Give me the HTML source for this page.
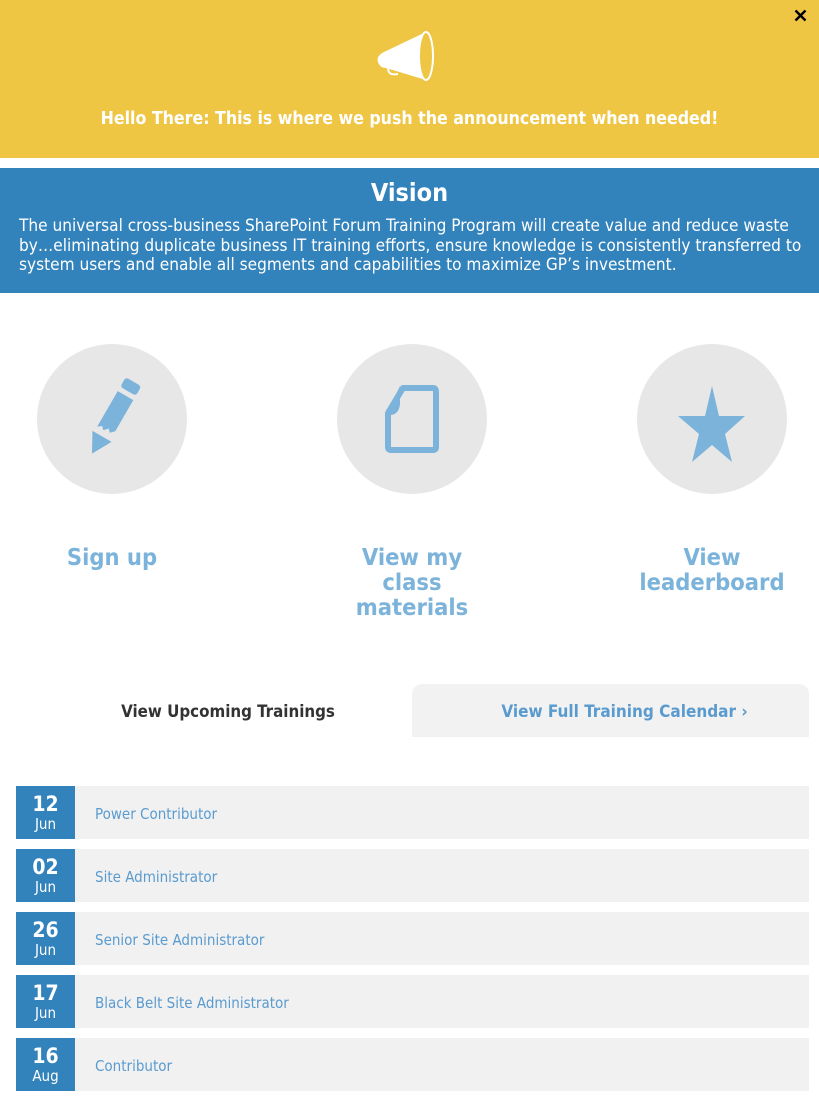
<!DOCTYPE html>
<html><head><meta charset="utf-8"><style>
*{margin:0;padding:0;box-sizing:border-box}
body{width:819px;height:1102px;background:#fff;font-family:"DejaVu Sans Condensed","DejaVu Sans","Liberation Sans",sans-serif;position:relative;overflow:hidden}
.ann{position:absolute;left:0;top:0;width:819px;height:158px;background:#EEC644}
.ann p{position:absolute;top:109px;width:100%;text-align:center;color:#fff;font-weight:bold;font-size:17.6px;white-space:nowrap}
.vis{position:absolute;left:0;top:168px;width:819px;height:125px;background:#3282BC;color:#fff}
.vis h2{text-align:center;font-size:25px;margin-top:10px;line-height:30px}
.vis p{margin:9px 0 0 19px;font-size:17.1px;line-height:19.5px;white-space:nowrap}
.c{position:absolute;top:344px;width:150px;height:150px;border-radius:50%;background:#E7E7E7}
.lbl{position:absolute;top:545px;width:200px;text-align:center;color:#7BB3DA;font-weight:bold;font-size:23.5px;line-height:25px}
.t1{position:absolute;left:30px;top:701px;width:396px;text-align:center;font-weight:bold;font-size:16.8px;color:#333;white-space:nowrap}
.t2{position:absolute;left:412px;top:684px;width:397px;height:53px;background:#F2F2F2;border-radius:10px 10px 0 0;text-align:center;font-weight:bold;font-size:17px;color:#5A9BCF;padding:18px 0 0 28px;white-space:nowrap}
.row{position:absolute;left:16px;width:793px;height:53px;background:#F1F1F1}
.d{position:absolute;left:0;top:0;width:59px;height:53px;background:#3282BC;color:#fff;text-align:center}
.d b{display:block;font-size:21px;line-height:22px;margin-top:7px}
.d span{display:block;font-size:15px;line-height:19px}
.row i{position:absolute;left:79px;top:19px;font-style:normal;font-size:15px;color:#5A9BCF}
</style></head><body>
<div class="ann">
<svg style="position:absolute;left:794px;top:9px" width="13" height="13" viewBox="0 0 13 13"><path d="M1.5 1.5 L11.5 11.5 M11.5 1.5 L1.5 11.5" stroke="#000" stroke-width="2.4"/></svg>
<svg style="position:absolute;left:374px;top:30px" width="64" height="52" viewBox="0 0 64 52">
<path d="M52 2 L10 22 Q2 26 4 32 Q6 38 12 38 L52 50 Z" fill="#fff"/>
<path d="M14 38 Q14 46 24 44" fill="none" stroke="#fff" stroke-width="2"/>
<ellipse cx="52" cy="26" rx="7" ry="24" fill="#EEC644" stroke="#fff" stroke-width="2"/>
</svg>
<p>Hello There: This is where we push the announcement when needed!</p>
</div>
<div class="vis"><h2>Vision</h2>
<p>The universal cross-business SharePoint Forum Training Program will create value and reduce waste<br>by…eliminating duplicate business IT training efforts, ensure knowledge is consistently transferred to<br>system users and enable all segments and capabilities to maximize GP’s investment.</p></div>
<div class="c" style="left:37px"><svg width="150" height="150" viewBox="0 0 150 150">
<g fill="#7BB3DA" transform="rotate(30 75 75)">
<rect x="66" y="32" width="18" height="11" rx="3"/>
<path d="M66 48 L84 48 L84 84 L80 88 L77 85 L73 89 L70 86 L66 89 Z"/>
<path d="M64 95 L86 95 L75 115 Z"/></g></svg></div>
<div class="c" style="left:337px"><svg width="150" height="150" viewBox="0 0 150 150">
<path d="M66 44 L96 44 Q99 44 99 48 L99 103 Q99 106 96 106 L54 106 Q51 106 51 103 L51 69 Z" fill="none" stroke="#7BB3DA" stroke-width="6" stroke-linejoin="round"/>
<path d="M49 71 L63 42 L63 60 Q62 70 54 71 Z" fill="#7BB3DA"/></svg></div>
<div class="c" style="left:637px"><svg width="150" height="150" viewBox="0 0 150 150">
<path d="M75 42 L82 72 L108 72 L88 90 L95 118 L75 101 L55 118 L62 90 L41 72 L68 72 Z" fill="#7BB3DA"/></svg></div>
<div class="lbl" style="left:12px">Sign up</div>
<div class="lbl" style="left:312px">View my<br>class<br>materials</div>
<div class="lbl" style="left:612px">View<br>leaderboard</div>
<div class="t1">View Upcoming Trainings</div>
<div class="t2">View Full Training Calendar ›</div>
<div class="row" style="top:786px"><div class="d"><b>12</b><span>Jun</span></div><i>Power Contributor</i></div>
<div class="row" style="top:849px"><div class="d"><b>02</b><span>Jun</span></div><i>Site Administrator</i></div>
<div class="row" style="top:912px"><div class="d"><b>26</b><span>Jun</span></div><i>Senior Site Administrator</i></div>
<div class="row" style="top:975px"><div class="d"><b>17</b><span>Jun</span></div><i>Black Belt Site Administrator</i></div>
<div class="row" style="top:1038px"><div class="d"><b>16</b><span>Aug</span></div><i>Contributor</i></div>
</body></html>
